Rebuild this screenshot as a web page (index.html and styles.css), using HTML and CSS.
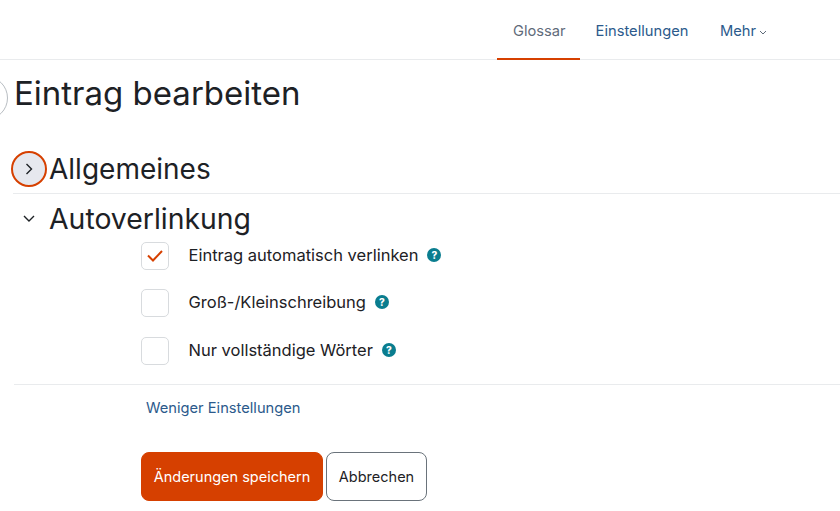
FILE: index.html
```html
<!DOCTYPE html>
<html lang="de">
<head>
<meta charset="utf-8">
<title>Eintrag bearbeiten</title>
<link rel="stylesheet" href="styles.css">
</head>
<body>
<nav class="tabs">
  <a class="tab active">Glossar</a>
  <a class="tab">Einstellungen</a>
  <a class="tab">Mehr<svg class="caret" width="8" height="5" viewBox="0 0 8 5"><path d="M1 1l3 3 3-3" fill="none" stroke="#5f6b7a" stroke-width="1"/></svg></a>
</nav>
<span class="drawer-toggle"></span>
<main class="page">
  <h1 class="title">Eintrag bearbeiten</h1>
  <section class="sec sec-general">
    <span class="toggle focused"><svg width="10" height="12" viewBox="0 0 10 12"><path d="M2.5 1l5 5-5 5" fill="none" stroke="#1d2125" stroke-width="1.4"/></svg></span>
    <h2 class="sec-title">Allgemeines</h2>
  </section>
  <section class="sec sec-auto">
    <span class="toggle"><svg width="14" height="10" viewBox="0 0 14 10"><path d="M2 2l5 5 5-5" fill="none" stroke="#1d2125" stroke-width="1.4"/></svg></span>
    <h2 class="sec-title">Autoverlinkung</h2>
  </section>
  <div class="fields">
    <div class="field">
      <span class="box"><svg width="18" height="14" viewBox="0 0 18 14"><path d="M2 6.500l5 5L16 2" fill="none" stroke="#d64000" stroke-width="2"/></svg></span>
      <span class="label">Eintrag automatisch verlinken</span><span class="help">?</span>
    </div>
    <div class="field">
      <span class="box"></span>
      <span class="label">Groß-/Kleinschreibung</span><span class="help">?</span>
    </div>
    <div class="field">
      <span class="box"></span>
      <span class="label">Nur vollständige Wörter</span><span class="help">?</span>
    </div>
  </div>
  <div class="more"><a class="more-link">Weniger Einstellungen</a></div>
  <div class="actions">
    <button class="btn primary">Änderungen speichern</button>
    <button class="btn secondary">Abbrechen</button>
  </div>
</main>
</body>
</html>
```
FILE: styles.css
```css
html, body { margin: 0; padding: 0; height: 100%; overflow: hidden; background: #fff; }
body { font-family: Inter, sans-serif; font-size: 15px; color: #1d2125; }
.tabs { display: flex; height: 59px; padding-left: 497px; border-bottom: 1px solid #e9ebed; }
.tab { display: flex; align-items: center; height: 59px; padding: 3px 16px 0 16px; margin-right: -0.5px; color: #2c5a8c; box-sizing: border-box; font-size: 14.700px; }
.tab.active { color: #5f6b7a; border-bottom: 2px solid #d64000; margin-bottom: -1px; height: 60px; padding-right: 14.500px; }
.caret { margin-left: 3px; margin-top: 3px; }
.drawer-toggle { position: absolute; left: -36px; top: 76px; width: 42px; height: 42px; border: 1px solid #b8bdc2; border-radius: 50%; background: #fff; }
.page { padding-left: 14px; }
.title { margin: 0; padding-top: 13px; font-family: Inter, sans-serif; font-weight: 400; font-size: 33px; line-height: 40px; }
.sec { display: flex; align-items: center; margin-left: -1px; }
.sec-title { margin: 0; font-family: Inter, sans-serif; font-weight: 400; font-size: 28px; line-height: 34px; }
.sec-auto .sec-title { font-size: 28.400px; }
.sec-general { padding-top: 38px; padding-bottom: 6px; border-bottom: 1px solid #e9ebed; }
.sec-auto { padding-top: 7px; padding-bottom: 1px; }
.toggle { display: flex; align-items: center; justify-content: center; width: 32px; height: 32px; margin-left: -2px; margin-right: 2px; border: 2px solid transparent; border-radius: 50%; flex: none; }
.toggle.focused { background: #e6e8ee; border-color: #d64000; }
.fields { padding-left: 127px; }
.field { display: flex; align-items: flex-start; height: 47.300px; padding-top: 4px; box-sizing: border-box; }
.box { display: flex; align-items: center; justify-content: center; box-sizing: border-box; width: 28px; height: 28px; border: 1px solid #d8dbde; border-radius: 5px; margin-right: 19.500px; }
.label { font-size: 16.500px; line-height: 27px; }
.help { display: inline-flex; align-items: center; justify-content: center; width: 14px; height: 14px; margin-left: 9px; margin-top: 6px; border-radius: 50%; background: #0a7d8f; color: #fff; font-size: 10px; font-weight: 800; }
.more { margin-top: 4.100px; padding-top: 13px; border-top: 1px solid #e9ebed; padding-left: 132px; }
.more-link { color: #2c5a8c; font-size: 14.700px; }
.actions { display: flex; gap: 3px; padding-left: 127px; padding-top: 35px; }
.btn { height: 49px; border-radius: 8px; font-family: Inter, sans-serif; font-size: 14.500px; box-sizing: border-box; }
.primary { width: 182px; background: #d64000; color: #fff; border: 1px solid #d64000; }
.secondary { width: 101px; background: #fff; color: #1d2125; border: 1px solid #6a737b; }
```
